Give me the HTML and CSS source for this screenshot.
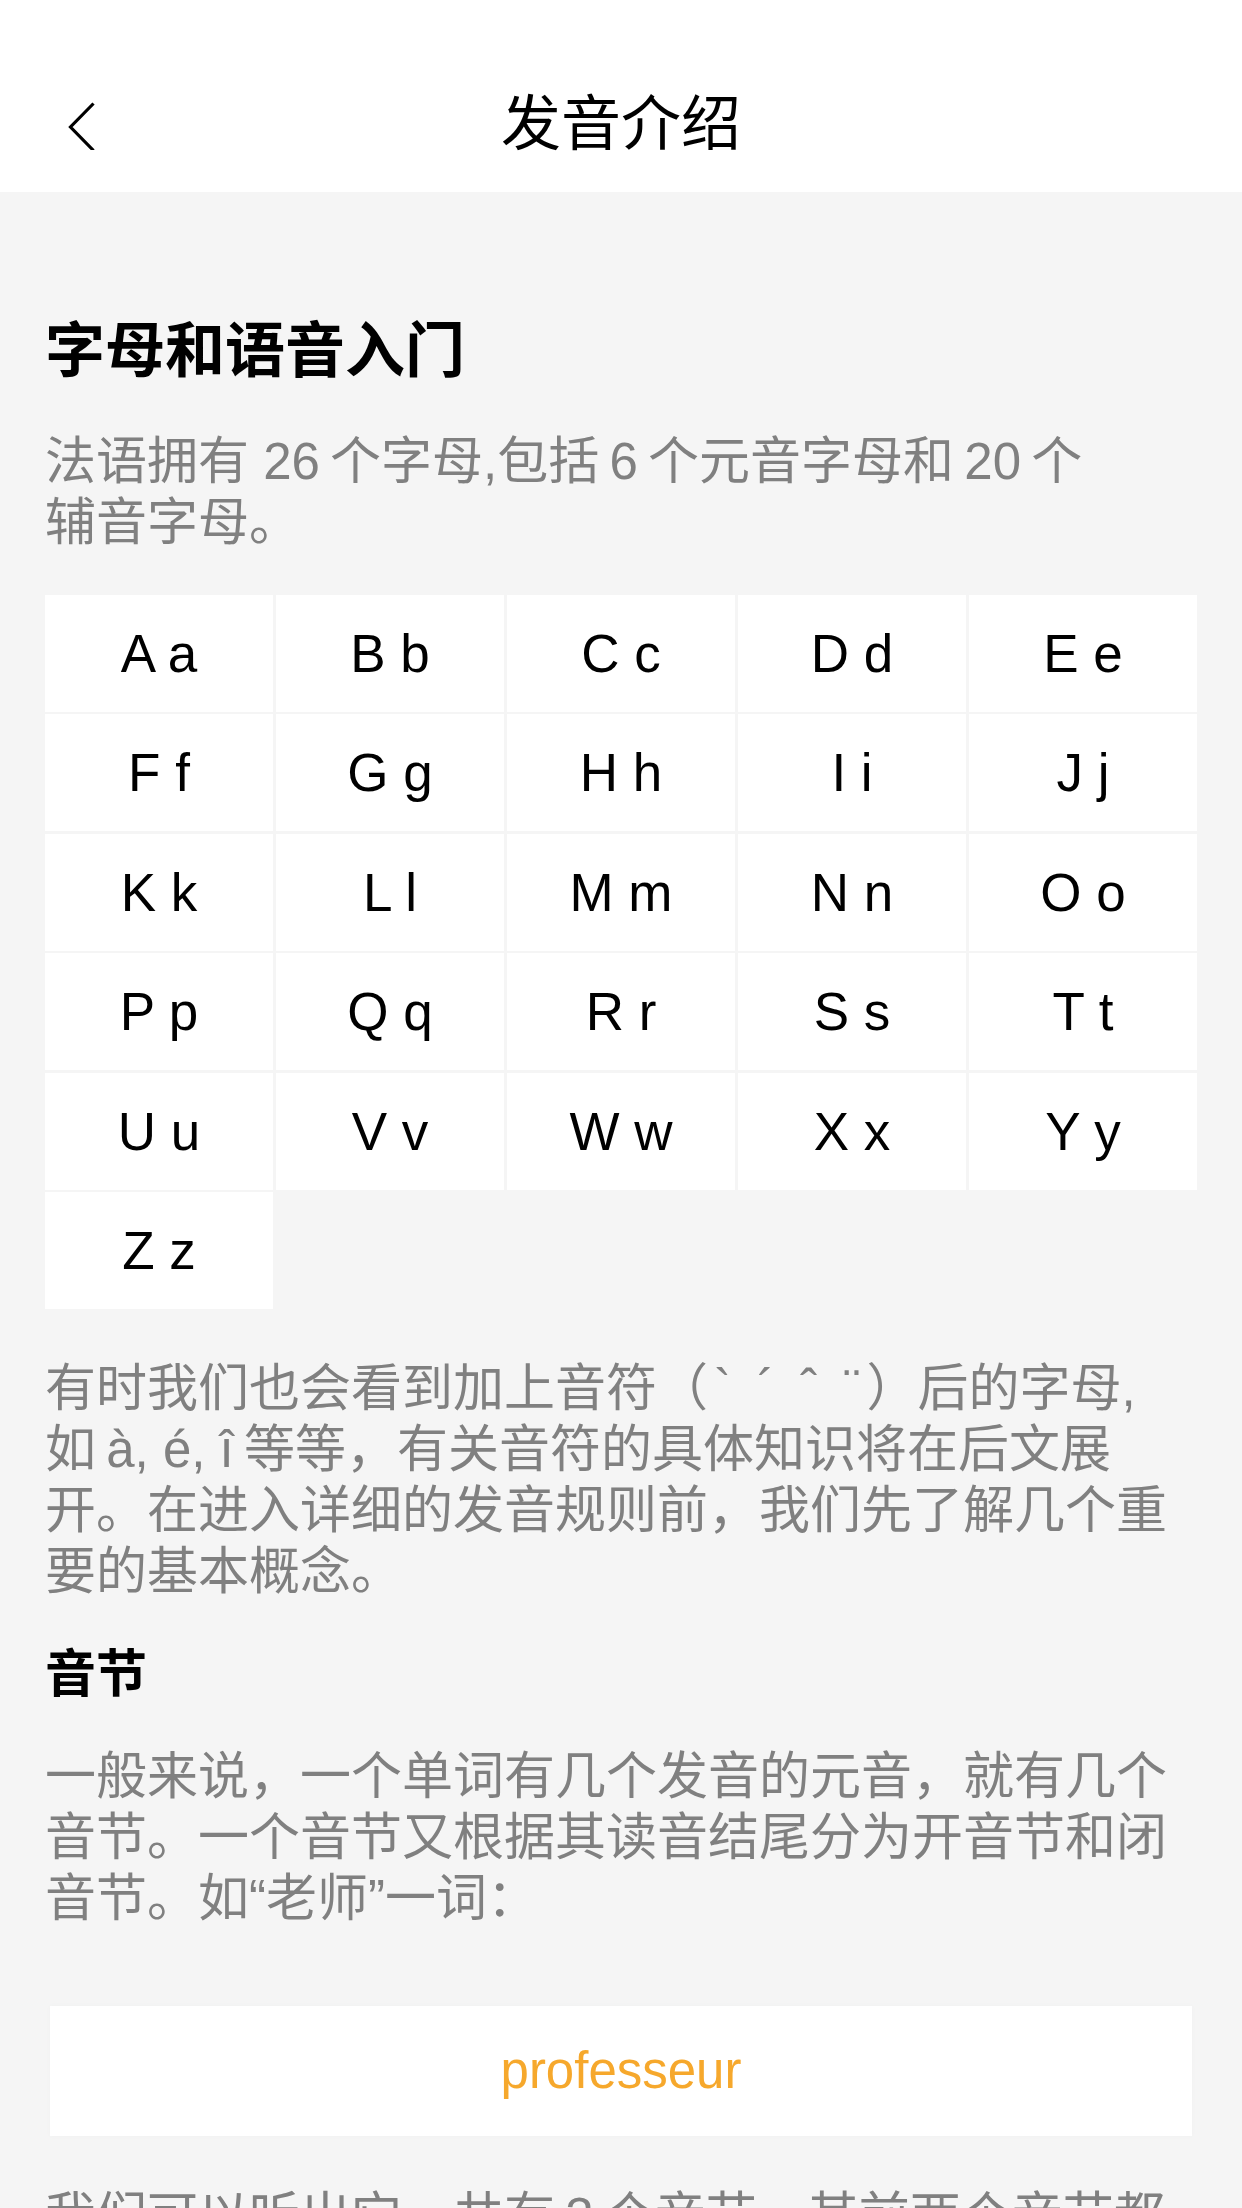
FILE: index.html
```html
<!DOCTYPE html>
<html lang="zh-CN">
<head>
<meta charset="utf-8">
<title>发音介绍</title>
<link rel="stylesheet" href="styles.css">
</head>
<body>
<header class="topbar">
  <div class="topbar-left">
    <svg class="back-icon" width="30" height="50" viewBox="0 0 30 50" aria-hidden="true">
      <polyline points="25.5,3.5 2.5,27 25.5,50.5" fill="none" stroke="#000" stroke-width="3.2" stroke-linejoin="miter"/>
    </svg>
  </div>
  <h1 class="topbar-title">发音介绍</h1>
  <div class="topbar-right"></div>
</header>
<main class="content">
  <h2 class="section-title">字母和语音入门</h2>
  <p class="para para-first">法语拥有 26&#8201;个字母,包括&#8201;6&#8201;个元音字母和&#8201;20&#8201;个<br>辅音字母。</p>
  <div class="letters">
    <div class="letter">A a</div>
    <div class="letter">B b</div>
    <div class="letter">C c</div>
    <div class="letter">D d</div>
    <div class="letter">E e</div>
    <div class="letter">F f</div>
    <div class="letter">G g</div>
    <div class="letter">H h</div>
    <div class="letter">I i</div>
    <div class="letter">J j</div>
    <div class="letter">K k</div>
    <div class="letter">L l</div>
    <div class="letter">M m</div>
    <div class="letter">N n</div>
    <div class="letter">O o</div>
    <div class="letter">P p</div>
    <div class="letter">Q q</div>
    <div class="letter">R r</div>
    <div class="letter">S s</div>
    <div class="letter">T t</div>
    <div class="letter">U u</div>
    <div class="letter">V v</div>
    <div class="letter">W w</div>
    <div class="letter">X x</div>
    <div class="letter">Y y</div>
    <div class="letter">Z z</div>
  </div>
  <p class="para para-accents">有时我们也会看到加上音符（<span class="accents">` ´ ˆ ¨</span>）后的字母,<br>如&#8201;à, é, î&#8201;等等，有关音符的具体知识将在后文展<br>开。在进入详细的发音规则前，我们先了解几个重<br>要的基本概念。</p>
  <h3 class="sub-title">音节</h3>
  <p class="para para-syllable">一般来说，一个单词有几个发音的元音，就有几个<br>音节。一个音节又根据其读音结尾分为开音节和闭<br>音节。如“老师”一词：</p>
  <div class="word-card">professeur</div>
  <p class="para para-last">我们可以听出它，共有&#8201;3&#8201;个音节，其前两个音节都是开音节，最后一个音节是闭音节。</p>
</main>
</body>
</html>
```
FILE: styles.css
```css
html, body {
  margin: 0;
  padding: 0;
}
body {
  width: 1242px;
  height: 2208px;
  overflow: hidden;
  background: #f5f5f5;
  font-family: "Liberation Sans", "Noto Sans CJK SC", sans-serif;
  color: #000;
}
.topbar {
  box-sizing: border-box;
  height: 192px;
  padding-top: 57px;
  background: #fff;
  display: grid;
  grid-template-columns: 1fr auto 1fr;
  align-items: center;
}
.topbar-left {
  display: flex;
  align-items: center;
  padding-left: 68px;
}
.back-icon {
  display: block;
}
.topbar-title {
  margin: 0;
  font-size: 60px;
  line-height: 72px;
  font-weight: 400;
  color: #000;
}
.content {
  padding: 124px 45px 0;
}
.section-title {
  margin: 0;
  font-size: 60px;
  line-height: 72px;
  font-weight: 700;
  color: #000;
}
.para {
  margin: 0;
  font-size: 51px;
  line-height: 61px;
  color: #808080;
}
.para-first {
  margin-top: 42.7px;
}
.letters {
  margin-top: 42.3px;
  display: grid;
  grid-template-columns: repeat(5, 228px);
  grid-auto-rows: 116.7px;
  column-gap: 3px;
  row-gap: 2.8px;
}
.letter {
  background: #fff;
  display: flex;
  align-items: center;
  justify-content: center;
  font-size: 53px;
  color: #000;
  white-space: pre;
}
.para-accents {
  margin-top: 48.5px;
}
.accents {
  letter-spacing: 6px;
  padding-left: 6px;
}
.sub-title {
  margin: 42px 0 0;
  font-size: 51px;
  line-height: 61px;
  font-weight: 700;
  color: #000;
}
.para-syllable {
  margin-top: 41px;
}
.word-card {
  margin: 77.3px 5px 0;
  height: 130px;
  background: #fff;
  box-shadow: 0 0 6px rgba(0, 0, 0, 0.025);
  display: flex;
  align-items: center;
  justify-content: center;
  font-size: 51px;
  color: #f6a82c;
}
.para-last {
  margin-top: 50px;
}
```
